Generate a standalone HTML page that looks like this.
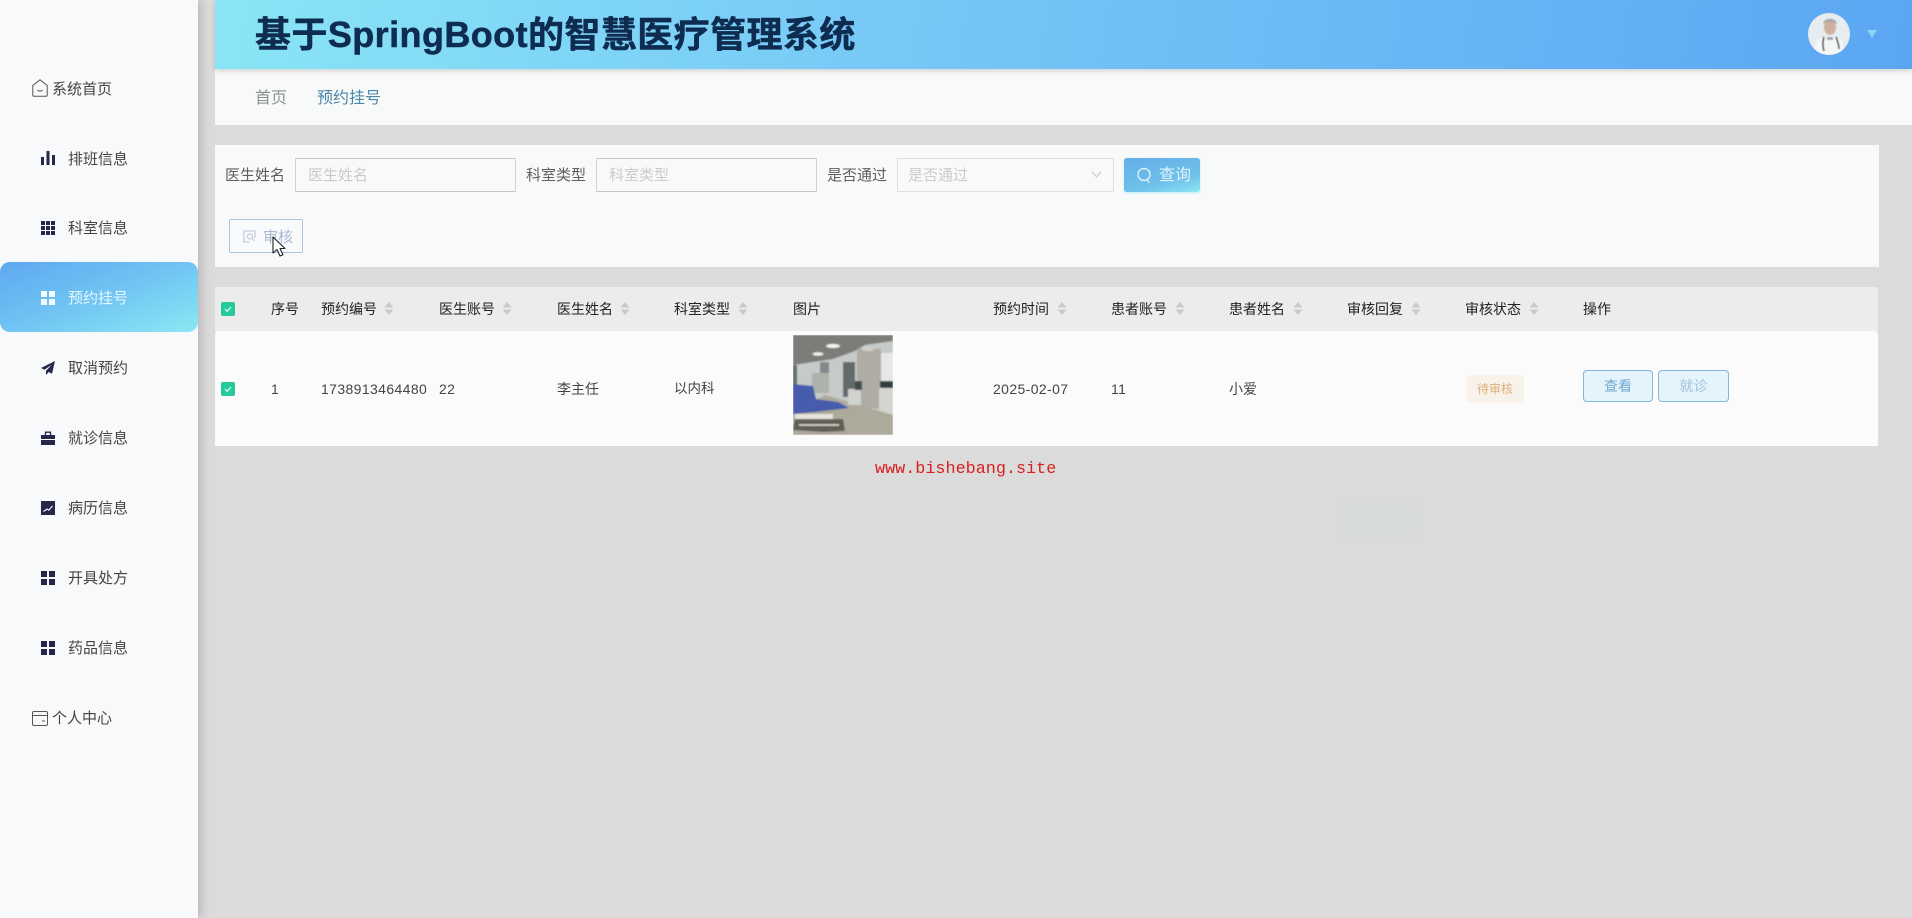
<!DOCTYPE html>
<html lang="zh-CN">
<head>
<meta charset="utf-8">
<title>基于SpringBoot的智慧医疗管理系统</title>
<style>
html,body{margin:0;padding:0;width:1912px;height:918px;overflow:hidden;background:#dbdbdb;font-family:"Liberation Sans","Noto Sans CJK SC",sans-serif;}
body{filter:blur(.35px)}
*{box-sizing:border-box}
.a{position:absolute;white-space:nowrap}
#side{left:0;top:0;width:198px;height:918px;background:#f8f9fa;box-shadow:2px 0 10px rgba(0,0,0,.2)}
.m{font-size:15px;color:#444;line-height:20px;height:20px;margin-top:1px}
.ic{position:absolute}
#hd{left:215px;top:0;width:1697px;height:69px;background:linear-gradient(100deg,#8ae5f5 0%,#74c5f6 45%,#5ba6f2 100%);box-shadow:0 2px 5px rgba(0,0,0,.16)}
#title{left:255px;top:13px;font-size:36px;line-height:44px;font-weight:700;color:#0e2b50;letter-spacing:.42px;-webkit-text-stroke:.5px #0e2b50}
#bc{left:215px;top:69px;width:1697px;height:56px;background:#f8f9f9}
.p{background:#f8f9f9}
.l{font-size:15px;color:#5f5f5f;line-height:20px;margin-top:1px}
.inp{height:34px;background:#f8f9f9;border:1px solid #d3d5d7;border-top-color:#c4c6c8;border-bottom-color:#c4c6c8;font-size:15px;color:#c9cbce;line-height:33px;padding-left:12px}
.th{font-size:14px;line-height:20px;color:#222;top:299px}
.td{font-size:14px;line-height:20px;color:#444;top:379px;letter-spacing:.38px}
.sort{position:absolute;top:301px;width:10px;height:15px}
.cb{width:14px;height:14px;background:#25c99c;border-radius:2px}
.btn{height:32px;top:370px;background:#e4f4fd;border:1px solid #83b6da;border-radius:4px;font-size:14px;line-height:30px;text-align:center}
</style>
</head>
<body>
<div class="a" id="side"></div>

<!-- active menu -->
<div class="a" style="left:0;top:262px;width:198px;height:70px;border-radius:10px;background:linear-gradient(160deg,#5ea8f0 0%,#71c4f3 50%,#8ae8f3 100%)"></div>

<!-- home -->
<svg class="ic" style="left:32px;top:79px" width="16" height="18" viewBox="0 0 16 18" fill="none" stroke="#555" stroke-width="1"><path d="M8 .8 15.200 6.500V16a1.300 1.300 0 0 1-1.300 1.300H2.100A1.300 1.300 0 0 1 .8 16V6.500Z"/><path d="M5.500 11c1 1.500 4 1.500 5 0"/></svg>
<div class="a m" style="left:52px;top:79px">系统首页</div>

<!-- bars -->
<svg class="ic" style="left:41px;top:151px" width="14" height="14" viewBox="0 0 14 14" fill="#25274a"><rect x="0" y="6" width="3" height="8"/><rect x="5.500" y="0" width="3" height="14"/><rect x="11" y="4" width="3" height="10"/></svg>
<div class="a m" style="left:68px;top:149px">排班信息</div>

<!-- grid 9 -->
<svg class="ic" style="left:41px;top:221px" width="14" height="14" viewBox="0 0 14 14" fill="#25274a"><rect x="0" y="0" width="4" height="4"/><rect x="5" y="0" width="4" height="4"/><rect x="10" y="0" width="4" height="4"/><rect x="0" y="5" width="4" height="4"/><rect x="5" y="5" width="4" height="4"/><rect x="10" y="5" width="4" height="4"/><rect x="0" y="10" width="4" height="4"/><rect x="5" y="10" width="4" height="4"/><rect x="10" y="10" width="4" height="4"/></svg>
<div class="a m" style="left:68px;top:218px">科室信息</div>

<!-- grid 4 active -->
<svg class="ic" style="left:41px;top:291px" width="14" height="14" viewBox="0 0 14 14" fill="#f2fbff"><rect width="6" height="6"/><rect x="8" width="6" height="6"/><rect y="8" width="6" height="6"/><rect x="8" y="8" width="6" height="6"/></svg>
<div class="a m" style="left:68px;top:288px;color:#e6f8fd">预约挂号</div>

<!-- plane -->
<svg class="ic" style="left:41px;top:361px" width="14" height="14" viewBox="0 0 14 14" fill="#25274a"><path d="M14 0 0 7l3.500 1.800L11 3.500 5 9.800V14l2.600-3 3.400 1.800Z"/></svg>
<div class="a m" style="left:68px;top:358px">取消预约</div>

<!-- briefcase -->
<svg class="ic" style="left:41px;top:431px" width="14" height="14" viewBox="0 0 14 14"><path fill="#25274a" d="M0 4h14v4H0ZM0 9h14v5H0Z"/><path fill="none" stroke="#25274a" stroke-width="1.300" d="M4.500 4V1.200h5V4"/></svg>
<div class="a m" style="left:68px;top:428px">就诊信息</div>

<!-- chart -->
<svg class="ic" style="left:41px;top:501px" width="14" height="14" viewBox="0 0 14 14"><rect width="14" height="14" fill="#25274a"/><path d="M2.500 10.500 6 8l1.800 1.200L11.500 5" fill="none" stroke="#fff" stroke-width="1.100"/></svg>
<div class="a m" style="left:68px;top:498px">病历信息</div>

<!-- grid 4 -->
<svg class="ic" style="left:41px;top:571px" width="14" height="14" viewBox="0 0 14 14" fill="#25274a"><rect width="6" height="6"/><rect x="8" width="6" height="6"/><rect y="8" width="6" height="6"/><rect x="8" y="8" width="6" height="6"/></svg>
<div class="a m" style="left:68px;top:568px">开具处方</div>

<svg class="ic" style="left:41px;top:641px" width="14" height="14" viewBox="0 0 14 14" fill="#25274a"><rect width="6" height="6"/><rect x="8" width="6" height="6"/><rect y="8" width="6" height="6"/><rect x="8" y="8" width="6" height="6"/></svg>
<div class="a m" style="left:68px;top:638px">药品信息</div>

<!-- card -->
<svg class="ic" style="left:32px;top:711px" width="16" height="15" viewBox="0 0 16 15" fill="none" stroke="#555" stroke-width="1"><rect x=".5" y=".5" width="15" height="14" rx="1.500"/><path d="M.5 4.500h15M10 10h3"/></svg>
<div class="a m" style="left:52px;top:708px">个人中心</div>

<!-- header -->
<div class="a" id="bc"></div>
<div class="a" id="hd"></div>
<div class="a" id="title">基于SpringBoot的智慧医疗管理系统</div>

<svg class="ic" style="left:1808px;top:13px" width="42" height="42" viewBox="0 0 42 42">
  <defs><clipPath id="av"><circle cx="21" cy="21" r="21"/></clipPath><filter id="b1"><feGaussianBlur stdDeviation=".6"/></filter></defs>
  <g clip-path="url(#av)">
    <rect width="42" height="42" fill="#e6ecef"/>
    <g filter="url(#b1)">
      <path d="M5 42 9 27l10-4h5l10 4 3 15Z" fill="#f5f6f6"/>
      <ellipse cx="22" cy="14" rx="6" ry="8" fill="#cdb0a0"/>
      <path d="M15 11c1-7 13-7 14 0-3-3-11-3-14 0Z" fill="#a5a8a8"/>
      <path d="M16 24c-2 6-1 10 0 14M28 24c2 5 3 8 3 12" stroke="#3c4847" stroke-width="1.600" fill="none"/>
      <path d="M19 24h6v3h-6Z" fill="#9aa5ab"/>
    </g>
  </g>
</svg>
<div class="a" style="left:1867px;top:30px;width:0;height:0;border-left:5px solid transparent;border-right:5px solid transparent;border-top:8px solid #8ed2f6"></div>

<div class="a" style="left:255px;top:87px;font-size:16px;line-height:24px;color:#8c9094">首页</div>
<div class="a" style="left:317px;top:87px;font-size:16px;line-height:24px;color:#4a87a9">预约挂号</div>

<!-- search panel -->
<div class="a p" style="left:215px;top:145px;width:1664px;height:122px"></div>
<div class="a l" style="left:225px;top:165px">医生姓名</div>
<div class="a inp" style="left:295px;top:158px;width:221px">医生姓名</div>
<div class="a l" style="left:526px;top:165px">科室类型</div>
<div class="a inp" style="left:596px;top:158px;width:221px">科室类型</div>
<div class="a l" style="left:827px;top:165px">是否通过</div>
<div class="a inp" style="left:897px;top:158px;width:217px;padding-left:10px;border-color:#dedfe1">是否通过</div>
<svg class="ic" style="left:1091px;top:170px" width="11" height="9" viewBox="0 0 11 9" fill="none" stroke="#c4c6c9" stroke-width="1"><path d="M1 1.500 5.500 7 10 1.500"/></svg>

<div class="a" style="left:1124px;top:158px;width:76px;height:34px;border-radius:3px;background:linear-gradient(165deg,#64aee9 0%,#6fc0ea 65%,#8ce6f2 100%);box-shadow:0 1px 2px rgba(140,230,242,.6)"></div>
<svg class="ic" style="left:1136px;top:167px" width="16" height="17" viewBox="0 0 16 17" fill="none" stroke="#e6f6fb" stroke-width="1.300"><circle cx="8" cy="7.500" r="6"/><path d="M11 13l2.500 3"/></svg>
<div class="a" style="left:1159px;top:164px;font-size:16px;line-height:24px;color:#dff4fa">查询</div>

<div class="a" style="left:229px;top:219px;width:74px;height:34px;background:#f8fafc;border:1px solid #a9c4dc;border-radius:2px"></div>
<svg class="ic" style="left:243px;top:230px" width="13" height="13" viewBox="0 0 13 13" fill="none" stroke="#b9c5d6" stroke-width="1.100"><path d="M12 8V1H1v11h6"/><circle cx="7" cy="6.500" r="2.500"/><path d="M9 8.500l2.500 2.500"/></svg>
<div class="a" style="left:263px;top:228px;font-size:15px;line-height:20px;color:#a9b9d0">审核</div>

<!-- table -->
<div class="a" style="left:215px;top:287px;width:1663px;height:45px;background:#ececed"></div>
<div class="a" style="left:215px;top:331px;width:1663px;height:115px;background:#fbfbfb;border-radius:4px 4px 0 0"></div>

<div class="a cb" style="left:221px;top:302px"><svg width="14" height="14" viewBox="0 0 14 14" fill="none" stroke="#e8fff8" stroke-width="1.200"><path d="M4 7l2.200 2.300L10 5"/></svg></div>
<div class="a cb" style="left:221px;top:382px"><svg width="14" height="14" viewBox="0 0 14 14" fill="none" stroke="#e8fff8" stroke-width="1.200"><path d="M4 7l2.200 2.300L10 5"/></svg></div>

<div class="a th" style="left:271px">序号</div>
<div class="a th" style="left:321px">预约编号</div>
<div class="a th" style="left:439px">医生账号</div>
<div class="a th" style="left:557px">医生姓名</div>
<div class="a th" style="left:674px">科室类型</div>
<div class="a th" style="left:793px">图片</div>
<div class="a th" style="left:993px">预约时间</div>
<div class="a th" style="left:1111px">患者账号</div>
<div class="a th" style="left:1229px">患者姓名</div>
<div class="a th" style="left:1347px">审核回复</div>
<div class="a th" style="left:1465px">审核状态</div>
<div class="a th" style="left:1583px">操作</div>

<svg class="sort" style="left:384px" viewBox="0 0 10 15" fill="#c8cacc"><path d="M5 1 9.500 6.500H.5ZM5 14 .5 8.500h9Z"/></svg>
<svg class="sort" style="left:502px" viewBox="0 0 10 15" fill="#c8cacc"><path d="M5 1 9.500 6.500H.5ZM5 14 .5 8.500h9Z"/></svg>
<svg class="sort" style="left:620px" viewBox="0 0 10 15" fill="#c8cacc"><path d="M5 1 9.500 6.500H.5ZM5 14 .5 8.500h9Z"/></svg>
<svg class="sort" style="left:738px" viewBox="0 0 10 15" fill="#c8cacc"><path d="M5 1 9.500 6.500H.5ZM5 14 .5 8.500h9Z"/></svg>
<svg class="sort" style="left:1057px" viewBox="0 0 10 15" fill="#c8cacc"><path d="M5 1 9.500 6.500H.5ZM5 14 .5 8.500h9Z"/></svg>
<svg class="sort" style="left:1175px" viewBox="0 0 10 15" fill="#c8cacc"><path d="M5 1 9.500 6.500H.5ZM5 14 .5 8.500h9Z"/></svg>
<svg class="sort" style="left:1293px" viewBox="0 0 10 15" fill="#c8cacc"><path d="M5 1 9.500 6.500H.5ZM5 14 .5 8.500h9Z"/></svg>
<svg class="sort" style="left:1411px" viewBox="0 0 10 15" fill="#c8cacc"><path d="M5 1 9.500 6.500H.5ZM5 14 .5 8.500h9Z"/></svg>
<svg class="sort" style="left:1529px" viewBox="0 0 10 15" fill="#c8cacc"><path d="M5 1 9.500 6.500H.5ZM5 14 .5 8.500h9Z"/></svg>

<div class="a td" style="left:271px">1</div>
<div class="a td" style="left:321px">1738913464480</div>
<div class="a td" style="left:439px">22</div>
<div class="a td" style="left:557px;letter-spacing:0">李主任</div>
<div class="a td" style="left:674px;font-size:13.500px;letter-spacing:0">以内科</div>
<div class="a td" style="left:993px">2025-02-07</div>
<div class="a td" style="left:1111px">11</div>
<div class="a td" style="left:1229px;letter-spacing:0">小爱</div>

<!-- photo -->
<svg class="ic" style="left:793px;top:335px" width="100" height="100" viewBox="0 0 100 100">
  <defs><filter id="b2" x="-5%" y="-5%" width="110%" height="110%"><feGaussianBlur stdDeviation=".9"/></filter><clipPath id="ph"><rect width="100" height="100"/></clipPath></defs>
  <g clip-path="url(#ph)"><g filter="url(#b2)">
    <rect width="100" height="100" fill="#c6cac9"/>
    <path d="M0 0H100V6L72 10 62 16 40 24 0 30Z" fill="#7c7c78"/>
    <rect x="0" y="30" width="4" height="20" fill="#656d6c"/>
    <rect x="19" y="38" width="17" height="20" fill="#aeb2aa"/>
    <rect x="27" y="27" width="9" height="11" fill="#85898a"/>
    <rect x="50" y="27" width="12" height="35" fill="#626a6c"/>
    <path d="M64 14h24v60l-24-2Z" fill="#aeaca3"/>
    <rect x="88" y="18" width="12" height="28" fill="#e6e8e8"/>
    <rect x="87" y="46" width="13" height="7" fill="#333d3e"/>
    <rect x="86" y="53" width="14" height="26" fill="#d4d4d0"/>
    <path d="M32 60 100 80V100H0V78Z" fill="#ada99b"/>
    <rect x="55" y="54" width="13" height="16" fill="#d0d2d0"/>
    <rect x="62" y="46" width="7" height="9" fill="#434c4d"/>
    <path d="M0 49 20 51 23 64 45 67 56 73 22 77 0 79Z" fill="#465cad"/>
    <path d="M2 79H40V84H2Z" fill="#e6e4dc"/>
    <path d="M2 84 50 84 52 96 30 97 0 95Z" fill="#5f5e57"/>
    <path d="M6 90H46" stroke="#e6e4dc" stroke-width="1.500"/>
    <ellipse cx="40" cy="11" rx="7" ry="2" fill="#f4f6f4"/>
    <ellipse cx="25" cy="19" rx="5.500" ry="1.800" fill="#eff1ef"/>
    <rect x="70" y="13" width="10" height="3" fill="#cfcfca"/>
  </g></g>
</svg>

<!-- status -->
<div class="a" style="left:1466px;top:375px;width:58px;height:28px;background:#f8f3ea;border-radius:4px;font-size:12px;line-height:28px;text-align:center;color:#dfae76">待审核</div>

<div class="a btn" style="left:1583px;width:70px;color:#6fa7ce">查看</div>
<div class="a btn" style="left:1658px;width:71px;color:#a4c0dc">就诊</div>

<!-- watermark -->
<div class="a" style="left:875px;top:460px;font-family:'Liberation Mono','DejaVu Sans Mono',monospace;font-size:16.800px;line-height:20px;color:#d91f1f">www.bishebang.site</div>

<!-- ghost button -->
<div class="a" style="left:1346px;top:505px;width:70px;height:30px;background:#d8dbdb;border-radius:3px;filter:blur(2px)"></div>

<!-- cursor -->
<svg class="ic" style="left:272px;top:236px" width="14" height="22" viewBox="0 0 14 22"><path d="M1 1V17l4-3.500L8 20l3-1.300L8 12.500h5Z" fill="#fff" stroke="#222" stroke-width="1.100" stroke-linejoin="round"/></svg>
</body>
</html>
